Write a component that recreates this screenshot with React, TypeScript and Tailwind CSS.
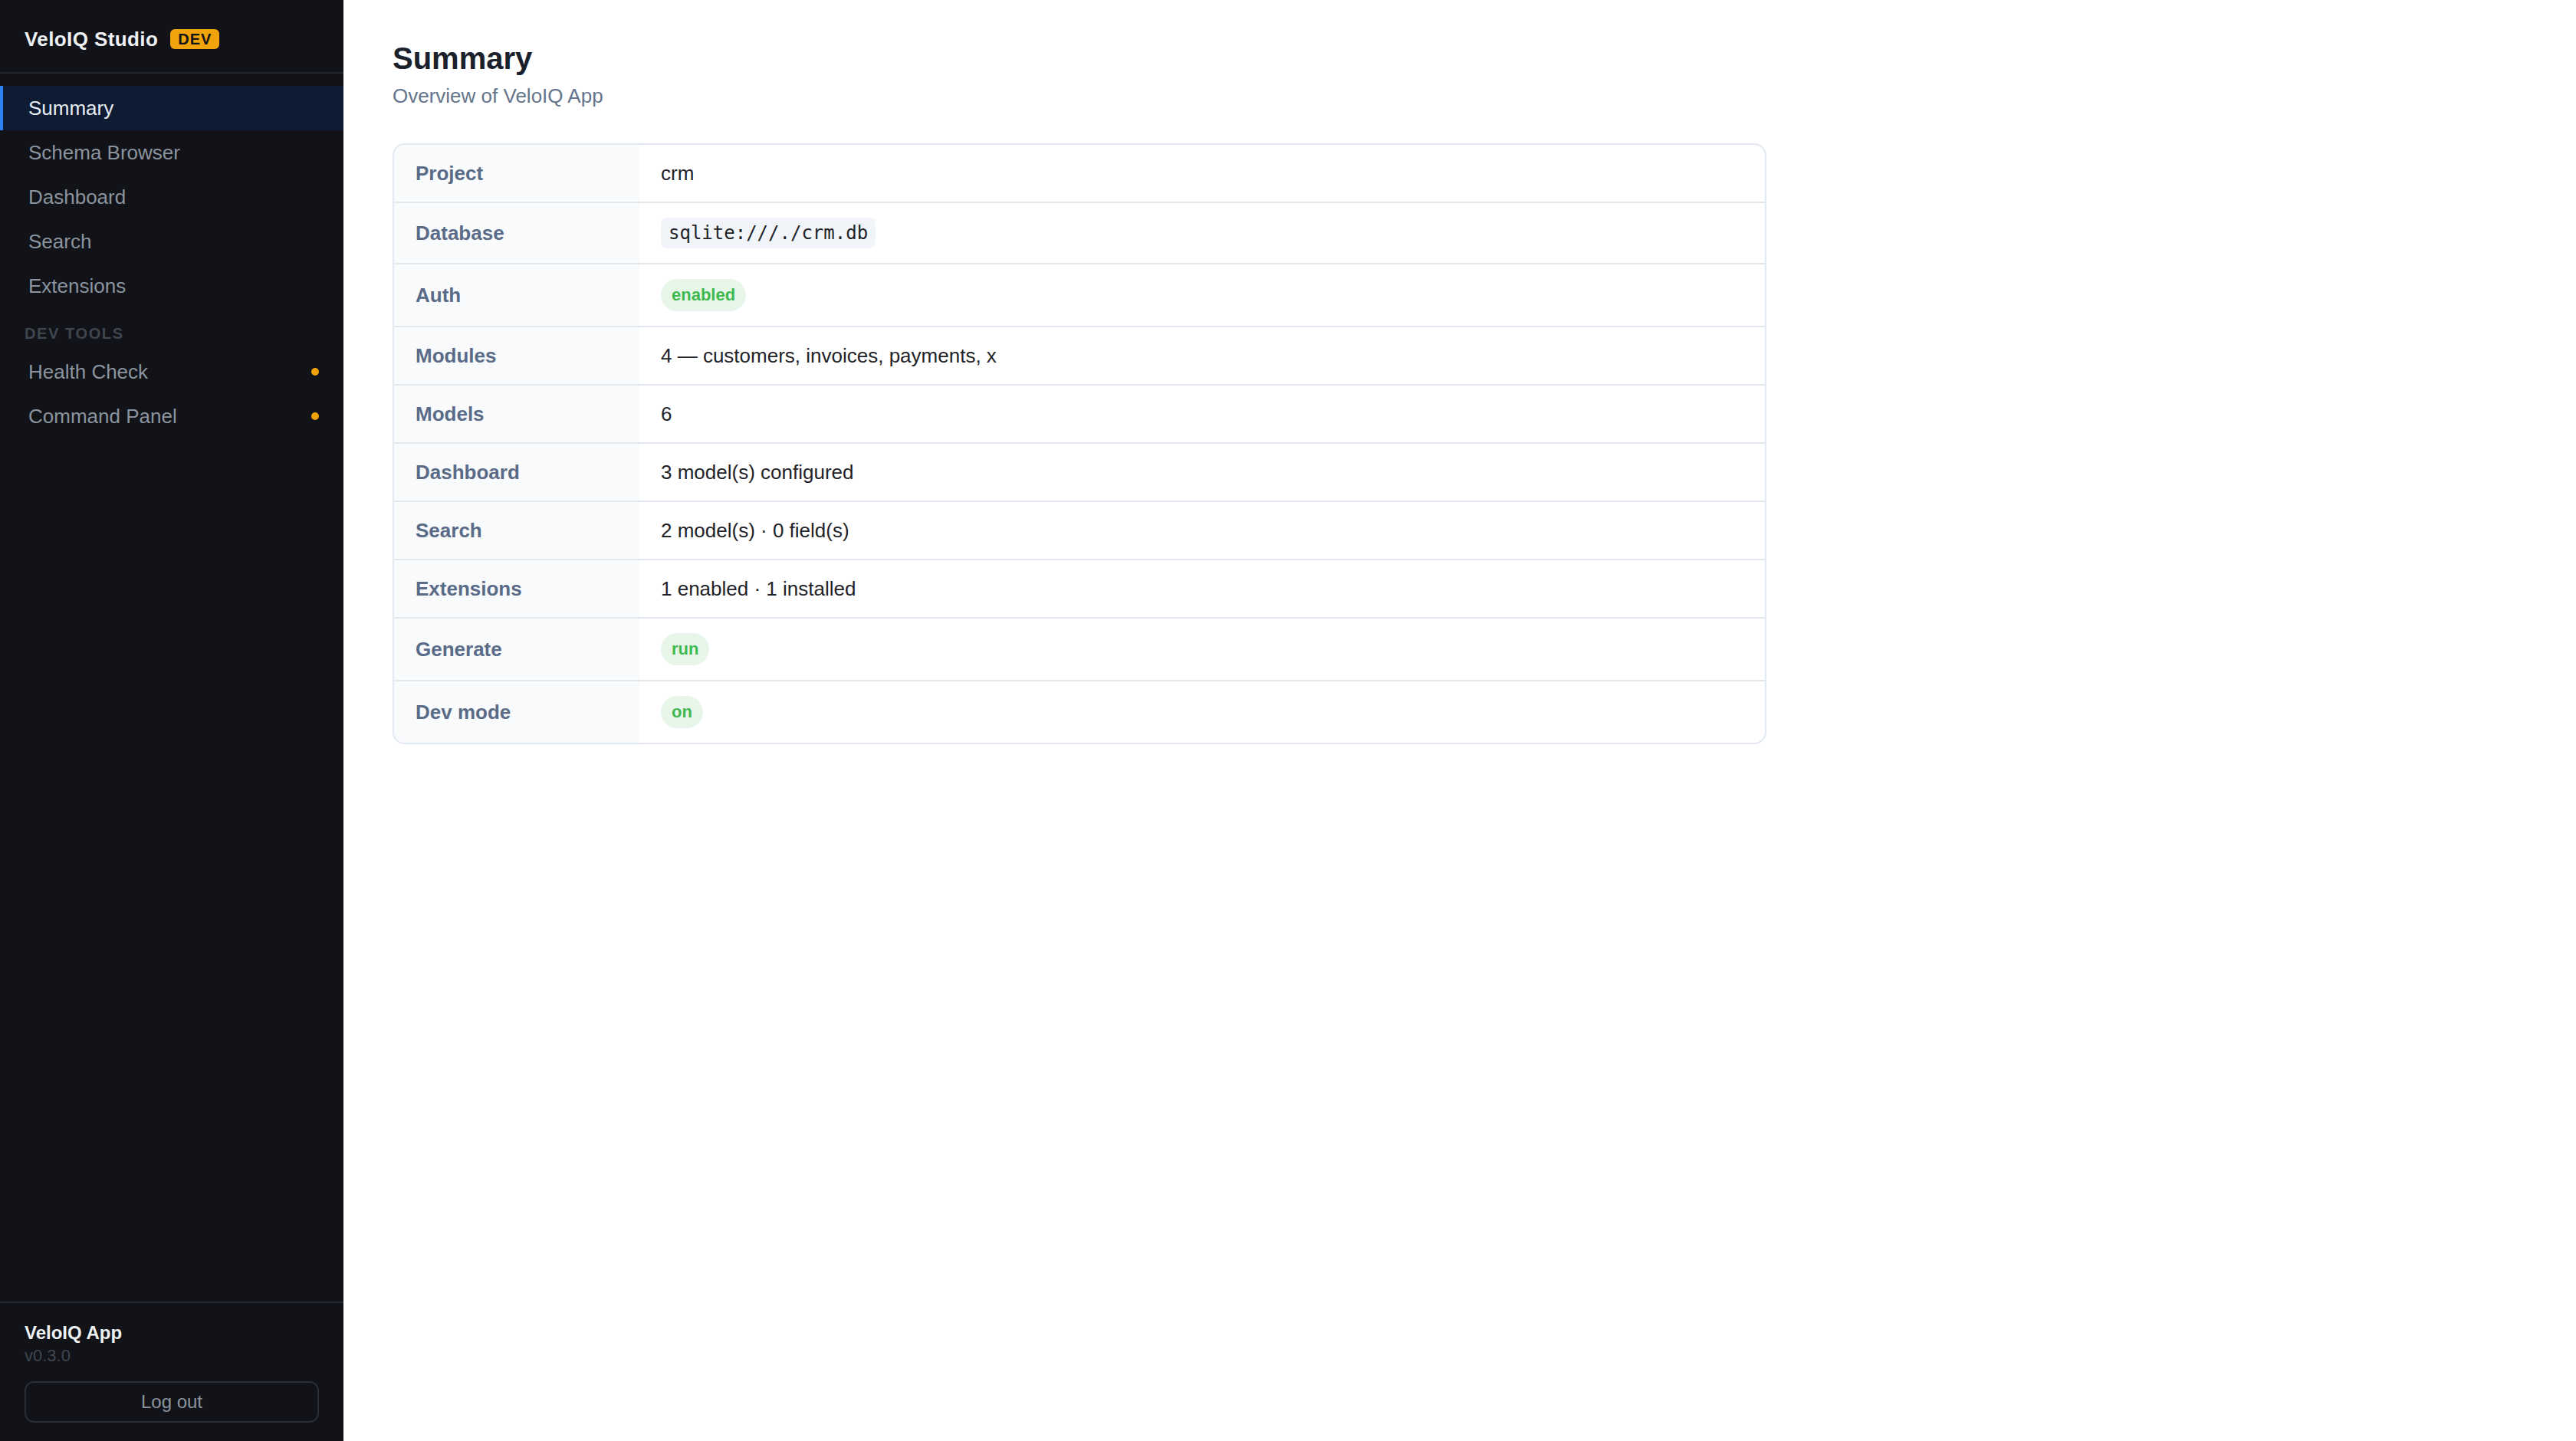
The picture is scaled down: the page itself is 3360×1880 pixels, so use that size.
import { ReactNode } from 'react';

type NavItem = {
  label: string;
  active?: boolean;
  dot?: boolean;
};

const mainNav: NavItem[] = [
  { label: 'Summary', active: true },
  { label: 'Schema Browser' },
  { label: 'Dashboard' },
  { label: 'Search' },
  { label: 'Extensions' },
];

const devNav: NavItem[] = [
  { label: 'Health Check', dot: true },
  { label: 'Command Panel', dot: true },
];

const NavLink = ({ item }: { item: NavItem }) => (
  <div
    className={`flex items-center justify-between h-[58px] border-l-4 pl-[33px] pr-8 text-[26px] ${
      item.active
        ? 'border-[#2f81f7] bg-[#0f1b33] text-[#e6edf3]'
        : 'border-transparent text-[#8b949e]'
    }`}
  >
    <span>{item.label}</span>
    {item.dot && <span className="w-[10px] h-[10px] rounded-full bg-[#f0a30a]" />}
  </div>
);

const Badge = ({ children }: { children: ReactNode }) => (
  <span className="inline-flex items-center h-[42px] px-[14px] rounded-full bg-[#e7f6e9] text-[#3fb950] text-[22px] font-bold">
    {children}
  </span>
);

const rows: { label: string; value: ReactNode }[] = [
  { label: 'Project', value: 'crm' },
  {
    label: 'Database',
    value: (
      <code className="px-[10px] py-[2px] rounded-lg bg-[#f1f5f9] text-[24px] text-[#1f2328] font-['DejaVu_Sans_Mono',monospace]">
        sqlite:///./crm.db
      </code>
    ),
  },
  { label: 'Auth', value: <Badge>enabled</Badge> },
  { label: 'Modules', value: '4 — customers, invoices, payments, x' },
  { label: 'Models', value: '6' },
  { label: 'Dashboard', value: '3 model(s) configured' },
  { label: 'Search', value: '2 model(s) · 0 field(s)' },
  { label: 'Extensions', value: '1 enabled · 1 installed' },
  { label: 'Generate', value: <Badge>run</Badge> },
  { label: 'Dev mode', value: <Badge>on</Badge> },
];

export default function App() {
  return (
    <div className="flex h-screen font-['Liberation_Sans',Arial,sans-serif]">
      <aside className="w-[448px] shrink-0 flex flex-col bg-[#111318]">
        <div className="h-[96px] flex items-center gap-4 px-8 pt-[8px] border-b-2 border-[#22272e]">
          <span className="text-[26px] font-bold text-[#eef1f4] tracking-[0.4px]">VeloIQ Studio</span>
          <span className="h-[26px] px-[10px] flex items-center rounded-md bg-[#f0a30a] text-[#111318] text-[20px] font-bold tracking-[1px] leading-none">
            DEV
          </span>
        </div>

        <nav className="pt-4 flex-1">
          {mainNav.map(item => (
            <NavLink key={item.label} item={item} />
          ))}
          <div className="h-[54px] flex items-end pb-[6px] px-8 text-[20px] font-bold tracking-[1.6px] text-[#3f4650]">
            DEV TOOLS
          </div>
          {devNav.map(item => (
            <NavLink key={item.label} item={item} />
          ))}
        </nav>

        <div className="border-t-2 border-[#22272e] px-8 pt-[22px] pb-6">
          <div className="text-[24px] font-bold text-[#eef1f4] leading-[34px]">VeloIQ App</div>
          <div className="text-[22px] text-[#3f4650] leading-[26px]">v0.3.0</div>
          <button className="mt-[20px] w-full h-[54px] rounded-xl border-2 border-[#2a2f37] text-[24px] text-[#8b949e]">
            Log out
          </button>
        </div>
      </aside>

      <main className="flex-1 bg-white px-16 pt-[51px]">
        <h1 className="text-[40px] leading-[50px] font-bold text-[#1a202c]">Summary</h1>
        <p className="mt-[6px] text-[26px] leading-[36px] text-[#64748b]">Overview of VeloIQ App</p>

        <div className="mt-[44px] max-w-[1792px] border-2 border-[#e2e8f0] rounded-2xl overflow-hidden">
          {rows.map((row, i) => (
            <div
              key={row.label}
              className={`flex ${i < rows.length - 1 ? 'border-b-2 border-[#e2e8f0]' : ''}`}
            >
              <div className="w-[320px] shrink-0 flex items-center bg-[#f8fafc] px-[28px] py-[19px] text-[26px] leading-[36px] font-bold text-[#5a6b87]">
                {row.label}
              </div>
              <div className="flex-1 flex items-center px-[28px] py-[19px] text-[26px] leading-[36px] text-[#1f2328]">
                {row.value}
              </div>
            </div>
          ))}
        </div>
      </main>
    </div>
  );
}
